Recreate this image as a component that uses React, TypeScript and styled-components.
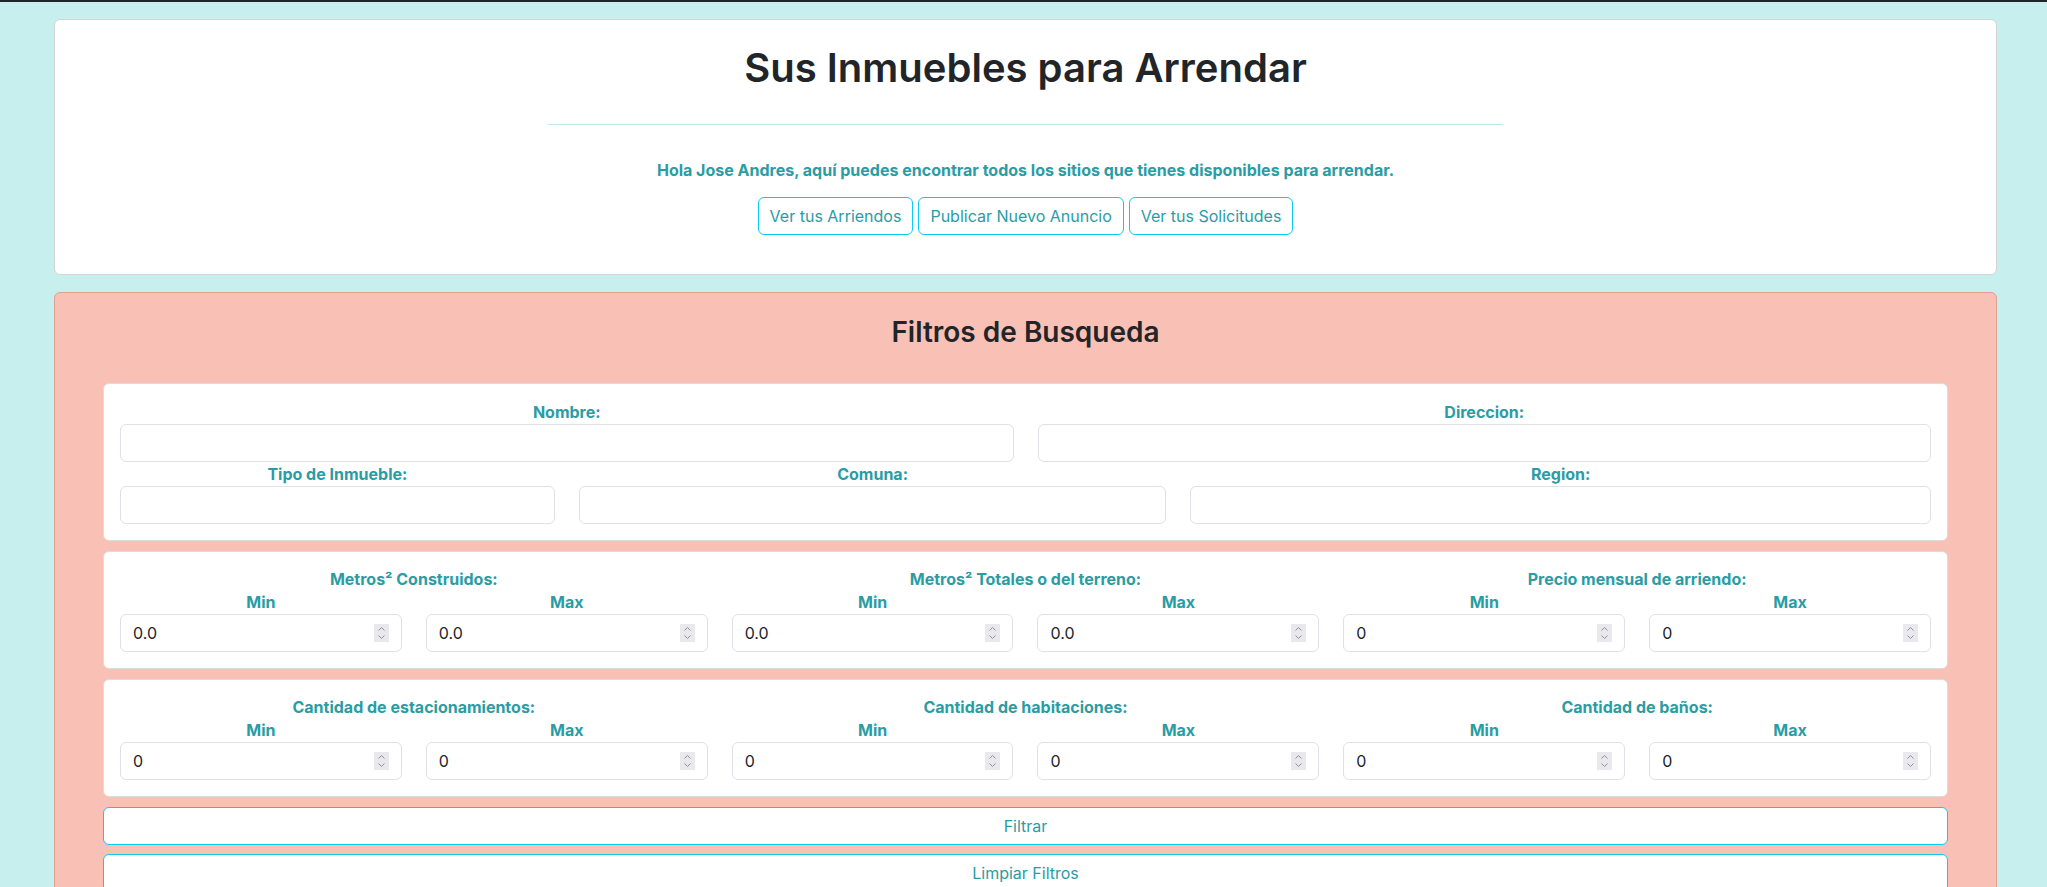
import React from 'react';
import styled, { createGlobalStyle } from 'styled-components';

const teal = '#2a9ca4';
const info = '#0dcaf0';

const GlobalStyle = createGlobalStyle`
	body {
		margin: 0;
		background: #c7efed;
		font-family: Inter, "Noto Sans", "Liberation Sans", sans-serif;
		color: #212529;
	}
	* { box-sizing: border-box; }
`;

interface RangeInfo {
	title: string;
	value: string;
}

const areaRanges: RangeInfo[] = [
	{ title: 'Metros² Construidos:', value: '0.0' },
	{ title: 'Metros² Totales o del terreno:', value: '0.0' },
	{ title: 'Precio mensual de arriendo:', value: '0' },
];

const roomRanges: RangeInfo[] = [
	{ title: 'Cantidad de estacionamientos:', value: '0' },
	{ title: 'Cantidad de habitaciones:', value: '0' },
	{ title: 'Cantidad de baños:', value: '0' },
];

// native spin buttons render differently headless, so draw the little stepper ourselves
const NumberInput: React.FC<{ value: string }> = ({ value }) => (
	<NumberWrap>
		<TextInput type="number" defaultValue={value} step="0.1" />
		<Stepper width="15" height="18" viewBox="0 0 15 18" aria-hidden>
			<rect width="15" height="18" fill="#e9e9ed" />
			<path d="M4.5 6.5 L7.5 3.5 L10.5 6.5" fill="none" stroke="#8f8f9d" strokeWidth="1" />
			<path d="M4.5 11.5 L7.5 14.5 L10.5 11.5" fill="none" stroke="#8f8f9d" strokeWidth="1" />
		</Stepper>
	</NumberWrap>
);

const RangeRow: React.FC<{ ranges: RangeInfo[] }> = ({ ranges }) => (
	<Panel>
		<Grid>
			{ranges.map((r) => (
				<Field key={r.title} $span={4}>
					<FieldLabel $line={23}>{r.title}</FieldLabel>
					<PairGrid>
						<div>
							<FieldLabel $line={23}>Min</FieldLabel>
							<NumberInput value={r.value} />
						</div>
						<div>
							<FieldLabel $line={23}>Max</FieldLabel>
							<NumberInput value={r.value} />
						</div>
					</PairGrid>
				</Field>
			))}
		</Grid>
	</Panel>
);

export default function App() {
	return (
		<>
			<GlobalStyle />
			<TopBar />
			<Page>
				<HeaderCard>
					<Title>Sus Inmuebles para Arrendar</Title>
					<Divider />
					<Greeting>Hola Jose Andres, aquí puedes encontrar todos los sitios que tienes disponibles para arrendar.</Greeting>
					<ActionRow>
						<OutlineButton>Ver tus Arriendos</OutlineButton>
						<OutlineButton>Publicar Nuevo Anuncio</OutlineButton>
						<OutlineButton>Ver tus Solicitudes</OutlineButton>
					</ActionRow>
				</HeaderCard>

				<FilterCard>
					<FilterTitle>Filtros de Busqueda</FilterTitle>

					<Panel>
						<Grid>
							<Field $span={6}>
								<FieldLabel>Nombre:</FieldLabel>
								<TextInput type="text" />
							</Field>
							<Field $span={6}>
								<FieldLabel>Direccion:</FieldLabel>
								<TextInput type="text" />
							</Field>
							<Field $span={3}>
								<FieldLabel>Tipo de Inmueble:</FieldLabel>
								<TextInput type="text" />
							</Field>
							<Field $span={4}>
								<FieldLabel>Comuna:</FieldLabel>
								<TextInput type="text" />
							</Field>
							<Field $span={5}>
								<FieldLabel>Region:</FieldLabel>
								<TextInput type="text" />
							</Field>
						</Grid>
					</Panel>

					<RangeRow ranges={areaRanges} />
					<RangeRow ranges={roomRanges} />

					<WideButton $top={3}>Filtrar</WideButton>
					<WideButton $top={0}>Limpiar Filtros</WideButton>
				</FilterCard>
			</Page>
		</>
	);
}

const TopBar = styled.div`
	height: 2px;
	background: #212529;
`;

const Page = styled.div`
	padding: 17px 50px 0 54px;
`;

const HeaderCard = styled.section`
	background: #fff;
	border: 1px solid #d2d4d4;
	border-radius: 6px;
	padding: 24px 16px 39px;
	text-align: center;
`;

const Title = styled.h1`
	margin: 0 0 32px;
	font-size: 40px;
	font-weight: 600;
	line-height: 1.2;
`;

const Divider = styled.hr`
	width: 50%;
	margin: 0 auto;
	border: 0;
	border-top: 1px solid #c4e5e9;
`;

const Greeting = styled.p`
	margin: 33px 0 15px;
	font-size: 16px;
	font-weight: 700;
	line-height: 24px;
	color: ${teal};
`;

const ActionRow = styled.div`
	display: flex;
	justify-content: center;
	gap: 5px;
`;

const OutlineButton = styled.button`
	font-family: inherit;
	font-size: 16px;
	line-height: 24px;
	padding: 6px 11px;
	color: ${teal};
	background: #fff;
	border: 1px solid ${info};
	border-radius: 6px;
	cursor: pointer;
`;

const FilterCard = styled.section`
	margin-top: 17px;
	background: #f9c1b5;
	border: 1px solid #dfa092;
	border-radius: 6px;
	padding: 23px 48px 40px;
`;

const FilterTitle = styled.h3`
	margin: 0 0 33px;
	text-align: center;
	font-size: 28px;
	font-weight: 600;
	line-height: 1.2;
`;

const Panel = styled.div`
	background: #fff;
	border: 1px solid #dcdcdc;
	border-radius: 6px;
	padding: 16px;
	margin-bottom: 10px;
`;

const Grid = styled.div`
	display: grid;
	grid-template-columns: repeat(12, 1fr);
	column-gap: 24px;
`;

const Field = styled.div<{ $span: number }>`
	grid-column: span ${(p) => p.$span};
	min-width: 0;
`;

const PairGrid = styled.div`
	display: grid;
	grid-template-columns: 1fr 1fr;
	column-gap: 24px;
`;

const FieldLabel = styled.label<{ $line?: number }>`
	display: block;
	text-align: center;
	font-size: 16px;
	font-weight: 700;
	line-height: ${(p) => p.$line ?? 24}px;
	color: ${teal};
`;

const TextInput = styled.input`
	display: block;
	width: 100%;
	height: 38px;
	padding: 6px 12px;
	font-family: inherit;
	font-size: 16px;
	color: #212529;
	background: #fff;
	border: 1px solid #dee2e6;
	border-radius: 6px;
	outline: none;
	-moz-appearance: textfield;

	&::-webkit-inner-spin-button,
	&::-webkit-outer-spin-button {
		-webkit-appearance: none;
		margin: 0;
	}
`;

const NumberWrap = styled.div`
	position: relative;
`;

const Stepper = styled.svg`
	position: absolute;
	right: 13px;
	top: 10px;
	pointer-events: none;
`;

const WideButton = styled.button<{ $top: number }>`
	display: block;
	width: 100%;
	margin: ${(p) => p.$top}px 0 9px;
	font-family: inherit;
	font-size: 16px;
	line-height: 24px;
	padding: 6px 12px;
	color: ${teal};
	background: #fff;
	border: 1px solid ${info};
	border-radius: 6px;
	cursor: pointer;
`;
